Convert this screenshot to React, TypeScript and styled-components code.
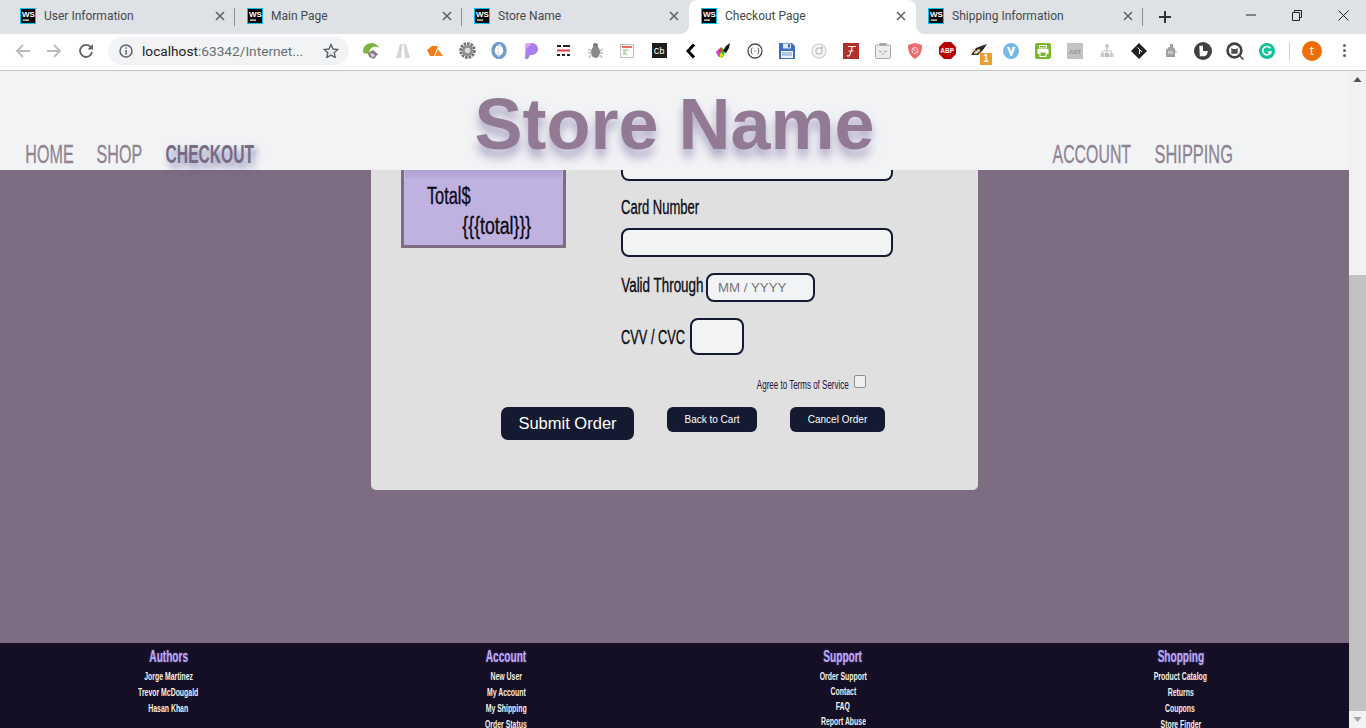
import { FC, PropsWithChildren, ReactNode } from 'react';
import styled, { createGlobalStyle } from 'styled-components';

const GlobalStyle = createGlobalStyle`
  html, body {
    margin: 0;
    height: 100%;
    overflow: hidden;
  }
  #root {
    height: 100%;
  }
  * {
    box-sizing: border-box;
  }
`;

const sans = `"Liberation Sans", Arial, sans-serif`;
const ink = '#141a30';
const plum = '#7d6c82';

const Window = styled.div`
  display: flex;
  flex-direction: column;
  width: 1366px;
  height: 728px;
  overflow: hidden;
  font-family: ${sans};
  background: ${plum};
`;

/* browser chrome */

const TabStrip = styled.div`
  display: flex;
  flex: none;
  height: 34px;
  padding-left: 8px;
  background: #dee1e6;
`;

const TabBox = styled.div<{ $active?: boolean; $divider?: boolean }>`
  position: relative;
  display: flex;
  flex: none;
  align-items: center;
  width: 227px;
  height: 34px;
  padding: 0 10px 2px 12px;
  border-radius: 8px 8px 0 0;
  background: ${({ $active }) => ($active ? '#fff' : 'transparent')};

  &::before {
    content: '';
    display: ${({ $active }) => ($active ? 'block' : 'none')};
    position: absolute;
    right: -8px;
    bottom: 0;
    left: -8px;
    height: 8px;
    background:
      radial-gradient(circle at 0 0, transparent 7.5px, #fff 8px) left / 8px 8px no-repeat,
      radial-gradient(circle at 100% 0, transparent 7.5px, #fff 8px) right / 8px 8px no-repeat;
  }

  &::after {
    content: '';
    display: ${({ $divider }) => ($divider ? 'block' : 'none')};
    position: absolute;
    top: 8px;
    right: 0;
    width: 1px;
    height: 18px;
    background: #8e9094;
  }
`;

const TabTitle = styled.span`
  flex: 1;
  margin-left: 8px;
  font-family: Roboto, sans-serif;
  font-size: 12px;
  color: #45494f;
  white-space: nowrap;
`;

const Strip = styled.div`
  display: flex;
  align-items: center;
`;

const NewTab = styled(Strip)`
  justify-content: center;
  width: 44px;
  color: #2b2b2b;
`;

const WindowControls = styled(Strip)`
  margin-left: auto;
  align-items: flex-start;
`;

const WindowButton = styled(Strip)`
  justify-content: center;
  width: 46px;
  height: 30px;
`;

const Toolbar = styled.div`
  display: flex;
  flex: none;
  align-items: center;
  height: 37px;
  padding: 0 0 3px 6px;
  border-bottom: 1px solid #c4c4c4;
  background: #fff;
`;

const NavSlot = styled(Strip)`
  justify-content: center;
  width: 32px;
`;

const Omnibox = styled.div`
  display: flex;
  align-items: center;
  width: 241px;
  height: 28px;
  margin: 0 6px;
  padding: 0 10px 0 11px;
  border-radius: 14px;
  background: #f1f3f4;
`;

const Url = styled.span`
  flex: 1;
  margin-left: 9px;
  font-family: Roboto, sans-serif;
  font-size: 13.7px;
  color: #6b6f73;
  white-space: nowrap;
`;

const UrlHost = styled.span`
  color: #202124;
`;

const ExtSlot = styled(Strip)`
  position: relative;
  flex: none;
  justify-content: center;
  width: 32px;
  height: 20px;
`;

const ExtBadge = styled.span`
  position: absolute;
  right: 3px;
  bottom: -4px;
  width: 12px;
  height: 12px;
  border-radius: 1px;
  font-size: 10px;
  font-weight: 700;
  line-height: 12px;
  text-align: center;
  color: #fff;
  background: #ee9a2f;
`;

const ToolbarDivider = styled.div`
  width: 1px;
  height: 18px;
  margin-left: 6px;
  background: #d0d2d4;
`;

const Avatar = styled.div`
  width: 20px;
  height: 20px;
  margin-left: 12px;
  border-radius: 50%;
  font-family: "Noto Sans", sans-serif;
  font-size: 12px;
  line-height: 20px;
  text-align: center;
  color: #fff;
  background: #ef6c00;
`;

const Kebab = styled.div`
  display: flex;
  flex-direction: column;
  gap: 2px;
  margin-left: 21px;
`;

const KebabDot = styled.span`
  width: 3px;
  height: 3px;
  border-radius: 50%;
  background: #5f6368;
`;

/* page */

const Viewport = styled.div`
  display: flex;
  flex: 1;
  min-height: 0;
`;

const Page = styled.div`
  display: flex;
  flex: 1;
  flex-direction: column;
  min-width: 0;
`;

const Scrollbar = styled.div`
  display: flex;
  flex: none;
  flex-direction: column;
  width: 17px;
  background: #f1f1f1;
`;

const ScrollArrow = styled.div`
  display: flex;
  flex: none;
  align-items: center;
  justify-content: center;
  height: 17px;
`;

const ScrollTrack = styled.div`
  flex: 1;
  padding-top: 187px;
`;

const ScrollThumb = styled.div`
  height: 436px;
  background: #c1c1c1;
`;

const Header = styled.header`
  display: grid;
  flex: none;
  grid-template-columns: 1fr auto 1fr;
  align-items: end;
  height: 99px;
  background: #f1f3f5;
`;

const Title = styled.h1`
  margin: 0;
  padding-bottom: 4px;
  font-size: 72px;
  font-weight: 700;
  line-height: 83px;
  color: #927a94;
  text-shadow: 0 8px 10px rgba(122, 108, 158, 0.55);
  white-space: nowrap;
`;

const Nav = styled.nav<{ $end?: boolean }>`
  display: flex;
  gap: 24px;
  justify-content: ${({ $end }) => ($end ? 'flex-end' : 'flex-start')};
  padding: 0 ${({ $end }) => ($end ? 116 : 0)}px 1px ${({ $end }) => ($end ? 0 : 25)}px;
`;

const NavLink = styled.a<{ $current?: boolean }>`
  font-size: 25px;
  font-weight: ${({ $current }) => ($current ? 700 : 400)};
  line-height: 30px;
  -webkit-text-stroke: ${({ $current }) => ($current ? 0 : 0.3)}px;
  color: ${({ $current }) => ($current ? '#776a85' : '#8f8392')};
  text-shadow: ${({ $current }) =>
    $current ? '5px 5px 9px rgba(95, 85, 150, 0.75)' : 'none'};
`;

const Squeezed = styled.span<{ $width: number; $scale: number }>`
  display: inline-flex;
  justify-content: center;
  width: ${({ $width }) => $width}px;
  white-space: nowrap;

  & > span {
    display: inline-block;
    flex: none;
    transform: scaleX(${({ $scale }) => $scale});
  }
`;

interface NarrowProps extends PropsWithChildren {
  readonly width: number;
  readonly scale: number;
}

// Oswald is not installed: Liberation Sans squeezed to the measured width
const Narrow: FC<NarrowProps> = ({ width, scale, children }) => (
  <Squeezed $width={width} $scale={scale}>
    <span>{children}</span>
  </Squeezed>
);

const Main = styled.main`
  display: flex;
  flex: 1;
  justify-content: center;
  min-height: 0;
  background: ${plum};
`;

const Card = styled.section`
  display: flex;
  flex-direction: column;
  width: 607px;
  height: 320px;
  border-radius: 0 0 5px 5px;
  color: #0b0b14;
  background: #e0e0e0;
`;

const Columns = styled.div`
  display: flex;
  padding-left: 30px;
`;

const Summary = styled.aside`
  flex: none;
  width: 165px;
  height: 78px;
  border: 3px solid ${plum};
  border-top: none;
  background: #c0b2e0;
`;

const SummaryBand = styled.div`
  height: 11px;
  margin-bottom: 3px;
  border: 1px solid #c6bae4;
  border-top: none;
  background: linear-gradient(#ae9fd0, #bdafde);
`;

const SummaryLabel = styled.div`
  padding-left: 23px;
  font-size: 23px;
  line-height: 24px;
  -webkit-text-stroke: 0.35px;
`;

const SummaryValue = styled.div`
  margin-top: 6px;
  padding-left: 58px;
  font-size: 23px;
  line-height: 24px;
  -webkit-text-stroke: 0.35px;
`;

const Fields = styled.div`
  display: flex;
  flex-direction: column;
  margin-left: 55px;
`;

const Input = styled.div`
  width: 272px;
  height: 29px;
  border: 2px solid ${ink};
  border-radius: 8px;
  background: #f1f3f5;
`;

const ClippedInput = styled(Input)`
  height: 11px;
  border-top: none;
  border-radius: 0 0 8px 8px;
`;

const FieldLabel = styled.label`
  display: block;
  font-size: 20px;
  line-height: 24px;
  -webkit-text-stroke: 0.35px;
`;

const CardNumberLabel = styled(FieldLabel)`
  margin: 14px 0 9px;
`;

const ValidLabel = styled(FieldLabel)`
  padding-bottom: 5px;
`;

const InlineField = styled.div`
  display: flex;
  align-items: center;
  gap: 3px;
  margin-top: 16px;
`;

const CvvField = styled(InlineField)`
  gap: 5px;
`;

const DateInput = styled(Input)`
  display: flex;
  align-items: center;
  width: 109px;
  padding-left: 10px;
  font-size: 13.3px;
  color: #757575;
`;

const CvvInput = styled(Input)`
  width: 54px;
  height: 37px;
`;

const AgreeRow = styled.div`
  display: flex;
  align-items: center;
  gap: 5px;
  height: 14px;
  margin: 21px 0 0 386px;
  font-size: 12.5px;
  color: #24123c;
`;

const AgreeText = styled.span`
  padding-top: 4px;
`;

const Checkbox = styled.span`
  width: 12px;
  height: 13px;
  margin-top: -4px;
  border: 1px solid #8f8f8f;
  border-radius: 2px;
  background: #efefef;
`;

const Actions = styled.div`
  display: flex;
  gap: 33px;
  align-items: flex-start;
  margin-top: 17px;
  padding-left: 130px;
`;

const Button = styled.button<{ $large?: boolean; $width: number }>`
  width: ${({ $width }) => $width}px;
  height: ${({ $large }) => ($large ? 33 : 25)}px;
  padding: 0;
  border: none;
  border-radius: ${({ $large }) => ($large ? 7 : 6)}px;
  font-family: ${sans};
  font-size: ${({ $large }) => ($large ? 16.5 : 10)}px;
  color: #fff;
  background: ${ink};
`;

const Footer = styled.footer`
  display: grid;
  flex: none;
  grid-template-columns: repeat(4, 1fr);
  height: 85px;
  overflow: hidden;
  padding-top: 5px;
  background: #150f26;
`;

const FooterColumn = styled.div<{ $pitch: number }>`
  display: flex;
  flex-direction: column;
  align-items: center;
  line-height: ${({ $pitch }) => $pitch}px;
`;

const FooterHeading = styled.div<{ $gap: number }>`
  height: 20px;
  margin-bottom: ${({ $gap }) => $gap}px;
  font-size: 16px;
  font-weight: 700;
  line-height: 18px;
  color: #bca9ee;
  text-shadow: 0 0 2px rgba(130, 110, 230, 0.8);
`;

const FooterLink = styled.div`
  font-size: 11.5px;
  font-weight: 700;
  color: #f3f1ea;
`;

/* icons */

const WsLogo: FC = () => (
  <svg width="16" height="16" viewBox="0 0 16 16">
    <rect x="0.5" y="0.5" width="15" height="15" fill="#000" stroke="#07c3f2" />
    <text x="2" y="8.5" fontSize="8" fontWeight="700" fill="#fff" fontFamily="Liberation Sans">
      WS
    </text>
    <rect x="3" y="11.5" width="6" height="1.2" fill="#fff" />
  </svg>
);

const CloseIcon: FC = () => (
  <svg width="10" height="10" viewBox="0 0 10 10" stroke="#5f6368" strokeWidth="1.6">
    <path d="M1 1l8 8M9 1l-8 8" />
  </svg>
);

const extIcons: ReactNode[] = [
  <svg width="18" height="18" viewBox="0 0 18 18" key="leaf">
    <path d="M1 10C1 4 5 1 10 1c3 0 6 2 7 5-3-2-9-2-10 5-2 1-5 1-6-1z" fill="#7db43c" />
    <path d="M6 11l5-3 5 4-4 5-5-2z" fill="#8d7f86" />
    <path d="M8 11l3 1 2 2-3 1z" fill="#e8e2e2" />
  </svg>,
  <svg width="16" height="16" viewBox="0 0 16 16" key="peak">
    <path d="M1 15L5 1h2.500L6 15zM15 15L11 1H8.500l1.500 14z" fill="#d5d5d5" />
  </svg>,
  <svg width="16" height="10" viewBox="0 0 16 10" key="tag">
    <path d="M0 4L5 0h6L7 10H3z" fill="#f57c14" />
    <path d="M8 10l3-7 5 7z" fill="#fb8c1c" />
  </svg>,
  <svg width="17" height="17" viewBox="0 0 17 17" key="gear">
    <circle cx="8.500" cy="8.500" r="6.800" fill="none" stroke="#707070" strokeWidth="3" strokeDasharray="2.500 1" />
    <circle cx="8.500" cy="8.500" r="5.500" fill="#8e8e8e" />
    <circle cx="8.500" cy="8.500" r="2.800" fill="#dcdcdc" />
  </svg>,
  <svg width="16" height="17" viewBox="0 0 16 17" key="ring">
    <ellipse cx="8" cy="8.500" rx="6" ry="7" fill="none" stroke="#6f9ccb" strokeWidth="3.500" />
    <path d="M9.500 2c-3 3-3.500 9-1.500 13" fill="none" stroke="#dbe7f2" strokeWidth="1.500" />
  </svg>,
  <svg width="15" height="16" viewBox="0 0 15 16" key="pocket">
    <path d="M2 0h6a6 6 0 0 1 0 12H6l-2 4H1z" fill="#a97ff0" />
    <path d="M2 0h6L1 7V2z" fill="#e6a6e8" />
  </svg>,
  <svg width="13" height="11" viewBox="0 0 13 11" key="dash">
    <path d="M0 1h4M6 1h7M0 10h3M5 10h3M10 10h3" stroke="#262626" strokeWidth="2" />
    <path d="M0 5.500h13" stroke="#e53935" strokeWidth="2" />
  </svg>,
  <svg width="15" height="17" viewBox="0 0 15 17" key="bug">
    <circle cx="7.500" cy="3.500" r="2.500" fill="#7a7a7a" />
    <ellipse cx="7.500" cy="10" rx="4.500" ry="6" fill="#8a8a8a" />
    <path d="M0 7l3 2M15 7l-3 2M0 11h3M15 11h-3M1 16l2-3M14 16l-2-3" stroke="#9a9a9a" />
  </svg>,
  <svg width="14" height="14" viewBox="0 0 14 14" key="note">
    <rect x="0.500" y="0.500" width="13" height="13" fill="#fafafa" stroke="#c2c2c2" />
    <rect x="2" y="2" width="10" height="2" fill="#ef6a5e" />
    <path d="M3 6h5M3 8h3M3 10h4" stroke="#7cc576" />
  </svg>,
  <svg width="15" height="15" viewBox="0 0 15 15" key="cb">
    <rect width="15" height="15" fill="#1d1d1d" />
    <text x="1.800" y="10.500" fontSize="9" fill="#fff" fontFamily="Liberation Mono">
      Cb
    </text>
  </svg>,
  <svg width="10" height="16" viewBox="0 0 10 16" key="chevron">
    <path d="M8 1.500L2 8l6 6.500" fill="none" stroke="#000" strokeWidth="3" />
  </svg>,
  <svg width="16" height="16" viewBox="0 0 16 16" key="brush">
    <path d="M1 9l5-5 4 3-1 6-3 2-3-2z" fill="#27c93f" />
    <path d="M1 9l3-3 2 1-2 7z" fill="#f22fe0" />
    <path d="M5 15l4-3-4-2z" fill="#ffe000" />
    <path d="M5 5l2 1 1 2-4 1z" fill="#e53935" />
    <path d="M8 8l3-5 4-3-1 5-3 5z" fill="#151515" />
  </svg>,
  <svg width="16" height="16" viewBox="0 0 16 16" key="braces">
    <circle cx="8" cy="8" r="7" fill="none" stroke="#4c4c4c" strokeWidth="1.300" />
    <path d="M5.500 5c-1 0-1 .8-1 1.500S4.500 8 3.800 8c.7 0 .7.800.7 1.500s0 1.500 1 1.500M10.500 5c1 0 1 .8 1 1.500s0 1.500.7 1.500c-.7 0-.7.800-.7 1.500s0 1.500-1 1.500" fill="none" stroke="#4c4c4c" />
    <path d="M7 8h.6M8.500 8h.6" stroke="#4c4c4c" />
  </svg>,
  <svg width="16" height="16" viewBox="0 0 16 16" key="floppy">
    <path d="M0 0h13l3 3v13H0z" fill="#3c6fc4" />
    <rect x="4" y="0.500" width="8" height="5" fill="#dfe8f6" />
    <rect x="9" y="1" width="2" height="3.500" fill="#3c6fc4" />
    <rect x="2" y="8" width="12" height="7" fill="#eef2f9" />
    <path d="M3 10h10M3 12h10" stroke="#7d9bd3" />
  </svg>,
  <svg width="16" height="16" viewBox="0 0 16 16" key="disc">
    <circle cx="8" cy="8" r="7" fill="#f6f6f6" stroke="#d6d6d6" strokeWidth="1.500" />
    <circle cx="8" cy="8" r="3" fill="#fff" stroke="#c4c4c4" strokeWidth="1.500" />
    <circle cx="11" cy="4.500" r="1" fill="#b5b5b5" />
  </svg>,
  <svg width="16" height="16" viewBox="0 0 16 16" key="font">
    <rect width="16" height="16" fill="#b2302b" />
    <path d="M5 3.500h8M8 3.500c2 0 0 5-1 8-.5 1.500-2 2-3 1M5.500 8h5" fill="none" stroke="#fbe5e3" strokeWidth="1.200" />
  </svg>,
  <svg width="16" height="16" viewBox="0 0 16 16" key="clip">
    <rect x="0.500" y="2" width="15" height="13.500" rx="1" fill="#ededed" stroke="#a8a8a8" />
    <rect x="4.500" y="0" width="7" height="3" fill="#a8a8a8" />
    <path d="M4 8l1.500 1L7 8M9 8l1.500 1L12 8M7 11h2" fill="none" stroke="#9a9a9a" />
  </svg>,
  <svg width="14" height="16" viewBox="0 0 14 16" key="shield">
    <path d="M7 0l7 2c0 7-2 11-7 14C2 13 0 9 0 2z" fill="#f0696b" />
    <circle cx="7" cy="7.500" r="3" fill="none" stroke="#fde3e3" />
    <path d="M5 5.500l4 4" stroke="#fde3e3" />
  </svg>,
  <svg width="17" height="17" viewBox="0 0 17 17" key="abp">
    <path d="M5 0h7l5 5v7l-5 5H5l-5-5V5z" fill="#b80000" />
    <text x="1.300" y="11.300" fontSize="6.500" fontWeight="700" fill="#fff" fontFamily="Liberation Sans">
      ABP
    </text>
  </svg>,
  <svg width="16" height="14" viewBox="0 0 16 14" key="plane">
    <path d="M0 11l5-7 5-2 6-2-4 6-5 5z" fill="#2a2a2a" />
    <path d="M3 9l5-4 1 2-4 3zM1 6l4 1M9 9l1 4" stroke="#e8a465" fill="#f3ead9" strokeWidth="1" />
  </svg>,
  <svg width="16" height="16" viewBox="0 0 16 16" key="vee">
    <circle cx="8" cy="8" r="8" fill="#73b9ea" />
    <path d="M4 4l3.500 9h1.500L12.500 4h-3L8 9 6.500 4z" fill="#fff" />
  </svg>,
  <svg width="16" height="16" viewBox="0 0 16 16" key="print">
    <rect width="16" height="16" rx="2" fill="#7cb82f" />
    <rect x="4.500" y="2.500" width="7" height="2.500" fill="none" stroke="#fff" />
    <rect x="2.500" y="6" width="11" height="5" fill="#fff" />
    <rect x="5" y="9" width="6" height="4.500" fill="#7cb82f" stroke="#fff" />
  </svg>,
  <svg width="16" height="16" viewBox="0 0 16 16" key="ast">
    <rect width="16" height="16" fill="#c3c3c3" />
    <text x="2" y="10.500" fontSize="6" fontWeight="700" fill="#8f8f8f" fontFamily="Liberation Sans">
      AST
    </text>
  </svg>,
  <svg width="14" height="15" viewBox="0 0 14 15" key="tree">
    <circle cx="7" cy="3" r="2" fill="#c6c6c6" />
    <path d="M7 5v5M2.500 10V8h9v2" fill="none" stroke="#c6c6c6" />
    <rect x="0.500" y="10" width="4" height="4" fill="#cdcdcd" />
    <rect x="5" y="10" width="4" height="4" fill="#bdbdbd" />
    <rect x="9.500" y="10" width="4" height="4" fill="#cdcdcd" />
  </svg>,
  <svg width="16" height="16" viewBox="0 0 16 16" key="git">
    <path d="M8 0l8 8-8 8-8-8z" fill="#222" />
    <path d="M6.500 4.500l2 2V11M8.500 6.500L11 9" stroke="#fff" fill="none" />
  </svg>,
  <svg width="15" height="15" viewBox="0 0 15 15" key="grey">
    <path d="M2 14V7l3-3h1V1h3v3l2 2v8z" fill="#a0a0a0" />
    <path d="M11 7l3 2-3 1z" fill="#c8c8c8" />
    <path d="M4 8h5v3H4z" fill="#c6c6c6" />
  </svg>,
  <svg width="18" height="18" viewBox="0 0 17 17" key="dark">
    <circle cx="8.500" cy="8.500" r="8.500" fill="#404040" />
    <path d="M5 3.500h3.500v5H13c0 2-1 4.500-3 5H5.500z" fill="#fff" />
  </svg>,
  <svg width="18" height="18" viewBox="0 0 17 17" key="octo">
    <circle cx="8" cy="8" r="6.500" fill="#fff" stroke="#404040" strokeWidth="2.500" />
    <path d="M5 11V5.500l1.500 1h3l1.500-1V11z" fill="#505050" />
    <path d="M12.500 12.500l4 4" stroke="#404040" strokeWidth="1.500" />
  </svg>,
  <svg width="16" height="16" viewBox="0 0 16 16" key="grammarly">
    <circle cx="8" cy="8" r="8" fill="#15c39a" />
    <path d="M11.500 5.300A4.200 4.200 0 1 0 12 9H8.800" fill="none" stroke="#fff" strokeWidth="1.600" />
  </svg>,
];

const badgedIcon = 19;

const tabs = [
  { title: 'User Information', divider: true },
  { title: 'Main Page', divider: true },
  { title: 'Store Name' },
  { title: 'Checkout Page', active: true },
  { title: 'Shipping Information', divider: true },
];

const footerColumns = [
  { heading: 'Authors', headingWidth: 39, pitch: 16, links: [['Jorge Martinez', 49], ['Trevor McDougald', 60], ['Hasan Khan', 39]] },
  { heading: 'Account', headingWidth: 40, pitch: 16, links: [['New User', 31], ['My Account', 38], ['My Shipping', 40], ['Order Status', 42]] },
  { heading: 'Support', headingWidth: 40, pitch: 15, links: [['Order Support', 47], ['Contact', 26], ['FAQ', 12], ['Report Abuse', 44]] },
  { heading: 'Shopping', headingWidth: 47, pitch: 16, links: [['Product Catalog', 53], ['Returns', 26], ['Coupons', 28], ['Store Finder', 41]] },
] as const;

const App: FC = () => (
  <>
    <GlobalStyle />
    <Window>
      <TabStrip>
        {tabs.map(({ title, active, divider }) => (
          <TabBox key={title} $active={active} $divider={divider}>
            <WsLogo />
            <TabTitle>{title}</TabTitle>
            <CloseIcon />
          </TabBox>
        ))}
        <NewTab>
          <svg width="12" height="12" viewBox="0 0 12 12" stroke="#303134" strokeWidth="2">
            <path d="M6 0v12M0 6h12" />
          </svg>
        </NewTab>
        <WindowControls>
          <WindowButton>
            <svg width="10" height="2" viewBox="0 0 10 2" stroke="#222">
              <path d="M0 1h10" />
            </svg>
          </WindowButton>
          <WindowButton>
            <svg width="10" height="11" viewBox="0 0 10 11" fill="none" stroke="#222">
              <path d="M2.500 2.500V.5h7v7h-2M.5 2.500h7v8h-7z" />
            </svg>
          </WindowButton>
          <WindowButton>
            <svg width="11" height="11" viewBox="0 0 11 11" stroke="#222">
              <path d="M.5.5l10 10M10.500.5l-10 10" />
            </svg>
          </WindowButton>
        </WindowControls>
      </TabStrip>

      <Toolbar>
        <NavSlot>
          <svg width="15" height="14" viewBox="0 0 15 14" fill="none" stroke="#b9bcc0" strokeWidth="1.800">
            <path d="M15 7H2M8 1L2 7l6 6" />
          </svg>
        </NavSlot>
        <NavSlot>
          <svg width="15" height="14" viewBox="0 0 15 14" fill="none" stroke="#b9bcc0" strokeWidth="1.800">
            <path d="M0 7h13M7 1l6 6-6 6" />
          </svg>
        </NavSlot>
        <NavSlot>
          <svg width="14" height="14" viewBox="0 0 14 14" fill="none" stroke="#5f6368" strokeWidth="1.800">
            <path d="M12 3.500A6 6 0 1 0 13 8" />
            <path d="M14 0v5.500H8.500z" fill="#5f6368" stroke="none" />
          </svg>
        </NavSlot>
        <Omnibox>
          <svg width="14" height="14" viewBox="0 0 14 14" fill="none" stroke="#5f6368" strokeWidth="1.500">
            <circle cx="7" cy="7" r="6" />
            <path d="M7 6v4.500M7 3.300v1.500" />
          </svg>
          <Url>
            <UrlHost>localhost</UrlHost>:63342/Internet...
          </Url>
          <svg width="16" height="15" viewBox="0 0 16 15" fill="none" stroke="#5f6368" strokeWidth="1.400">
            <path d="M8 1.500l2 4.500 4.800.5-3.600 3.200 1 4.800L8 12.100l-4.200 2.400 1-4.800L1.200 6.500 6 6z" />
          </svg>
        </Omnibox>
        {extIcons.map((icon, index) => (
          <ExtSlot key={index}>
            {icon}
            {badgedIcon === index && <ExtBadge>1</ExtBadge>}
          </ExtSlot>
        ))}
        <ToolbarDivider />
        <Avatar>t</Avatar>
        <Kebab>
          <KebabDot />
          <KebabDot />
          <KebabDot />
        </Kebab>
      </Toolbar>

      <Viewport>
        <Page>
          <Header>
            <Nav>
              <NavLink>
                <Narrow width={48} scale={0.645}>HOME</Narrow>
              </NavLink>
              <NavLink>
                <Narrow width={45} scale={0.645}>SHOP</Narrow>
              </NavLink>
              <NavLink $current>
                <Narrow width={88} scale={0.625}>CHECKOUT</Narrow>
              </NavLink>
            </Nav>
            <Title>Store Name</Title>
            <Nav $end>
              <NavLink>
                <Narrow width={78} scale={0.635}>ACCOUNT</Narrow>
              </NavLink>
              <NavLink>
                <Narrow width={78} scale={0.655}>SHIPPING</Narrow>
              </NavLink>
            </Nav>
          </Header>

          <Main>
            <Card>
              <Columns>
                <Summary>
                  <SummaryBand />
                  <SummaryLabel>
                    <Narrow width={44} scale={0.71}>Total$</Narrow>
                  </SummaryLabel>
                  <SummaryValue>
                    <Narrow width={69} scale={0.77}>{'{{{total}}}'}</Narrow>
                  </SummaryValue>
                </Summary>
                <Fields>
                  <ClippedInput />
                  <CardNumberLabel>
                    <Narrow width={78} scale={0.65}>Card Number</Narrow>
                  </CardNumberLabel>
                  <Input />
                  <InlineField>
                    <ValidLabel>
                      <Narrow width={82} scale={0.67}>Valid Through</Narrow>
                    </ValidLabel>
                    <DateInput>MM / YYYY</DateInput>
                  </InlineField>
                  <CvvField>
                    <FieldLabel>
                      <Narrow width={64} scale={0.64}>CVV / CVC</Narrow>
                    </FieldLabel>
                    <CvvInput />
                  </CvvField>
                </Fields>
              </Columns>
              <AgreeRow>
                <AgreeText>
                  <Narrow width={92} scale={0.64}>Agree to Terms of Service</Narrow>
                </AgreeText>
                <Checkbox />
              </AgreeRow>
              <Actions>
                <Button $large $width={133}>Submit Order</Button>
                <Button $width={90}>Back to Cart</Button>
                <Button $width={95}>Cancel Order</Button>
              </Actions>
            </Card>
          </Main>

          <Footer>
            {footerColumns.map(({ heading, headingWidth, pitch, links }) => (
              <FooterColumn key={heading} $pitch={pitch}>
                <FooterHeading $gap={16 - pitch}>
                  <Narrow width={headingWidth} scale={0.63}>{heading}</Narrow>
                </FooterHeading>
                {links.map(([label, width]) => (
                  <FooterLink key={label}>
                    <Narrow width={width} scale={0.6}>{label}</Narrow>
                  </FooterLink>
                ))}
              </FooterColumn>
            ))}
          </Footer>
        </Page>

        <Scrollbar>
          <ScrollArrow>
            <svg width="9" height="5" viewBox="0 0 9 5" fill="#505050">
              <path d="M4.500 0l4 5h-8z" />
            </svg>
          </ScrollArrow>
          <ScrollTrack>
            <ScrollThumb />
          </ScrollTrack>
          <ScrollArrow>
            <svg width="9" height="5" viewBox="0 0 9 5" fill="#a3a3a3">
              <path d="M4.500 5l4-5h-8z" />
            </svg>
          </ScrollArrow>
        </Scrollbar>
      </Viewport>
    </Window>
  </>
);

export default App;
